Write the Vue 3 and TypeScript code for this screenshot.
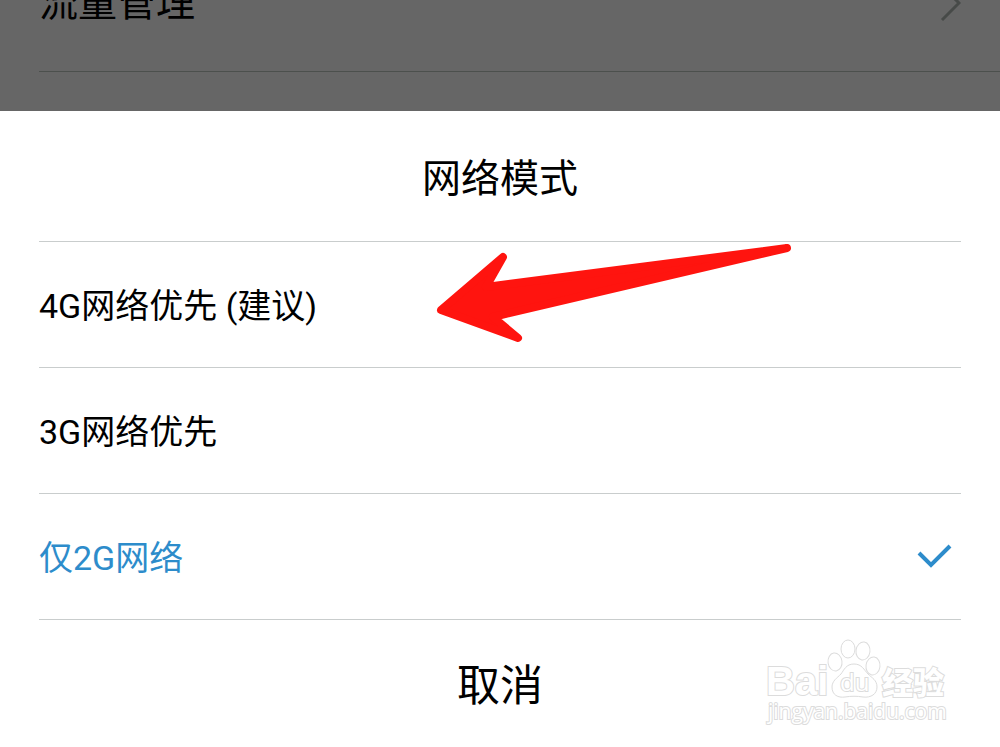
<script setup lang="ts">
import { ref } from 'vue'

interface NetworkMode {
  id: string
  label: string
}

const modes: NetworkMode[] = [
  { id: '4g', label: '4G网络优先 (建议)' },
  { id: '3g', label: '3G网络优先' },
  { id: '2g', label: '仅2G网络' },
]
const selected = ref('2g')
</script>

<template>
  <div class="screen">
    <div class="backdrop">
      <a class="setting" href="#">
        <span>流量管理</span>
        <svg class="chevron" width="24" height="40" viewBox="0 0 24 40" aria-hidden="true">
          <path d="M5 3 22 20 5 37" fill="none" stroke="#474a48" stroke-width="3" />
        </svg>
      </a>
    </div>

    <section class="sheet" role="dialog" aria-labelledby="sheet-title">
      <h1 id="sheet-title" class="title">网络模式</h1>
      <div class="options" role="radiogroup" aria-labelledby="sheet-title">
        <label
          v-for="mode in modes"
          :key="mode.id"
          class="option"
          :class="{ active: mode.id === selected }"
          :for="'mode-' + mode.id"
        >
          <input :id="'mode-' + mode.id" v-model="selected" type="radio" name="mode" :value="mode.id" />
          <span>{{ mode.label }}</span>
          <svg v-if="mode.id === selected" class="check" width="36" height="26" viewBox="0 0 36 26" aria-hidden="true">
            <path d="M3 10 15 22 34 3" fill="none" stroke="#2d8ccb" stroke-width="4" />
          </svg>
        </label>
        <svg class="arrow" width="360" height="102" viewBox="0 0 360 102" aria-hidden="true">
          <path
            d="M6 68 68 15 51 45 352 6 58 75 83 96Z"
            fill="#ff140f"
            stroke="#ff140f"
            stroke-width="8"
            stroke-linejoin="round"
          />
        </svg>
      </div>
      <button class="cancel" type="button">取消</button>

      <svg class="watermark" width="190" height="96" viewBox="0 0 190 96" role="img" aria-label="Baidu经验">
        <g fill="#fff" stroke="#dcdcdc" stroke-width="1">
          <text class="brand" x="3" y="60">Bai</text>
          <ellipse cx="72" cy="27" rx="7" ry="9" transform="rotate(-8 72 27)" />
          <ellipse cx="85" cy="14" rx="7" ry="9" />
          <ellipse cx="100" cy="16" rx="7" ry="9" transform="rotate(8 100 16)" />
          <ellipse cx="110" cy="31" rx="7" ry="9" transform="rotate(8 110 31)" />
          <path d="M91 29c-8 0-10 6-13 10-4 4-9 7-9 13 0 8 6 11 13 10 6-1 12-1 18 0 8 1 14-3 14-10 0-7-5-9-9-13-4-4-6-10-14-10Z" />
          <text class="du" x="77" y="56">du</text>
          <text class="cjk" x="119" y="59">经验</text>
          <text class="site" x="5" y="84">jingyan.baidu.com</text>
        </g>
      </svg>
    </section>
  </div>
</template>

<style>
body {
  margin: 0;
}
</style>

<style scoped>
.screen {
  display: flex;
  flex-direction: column;
  min-height: 100vh;
  background: #fff;
  color: #000;
  font-family: Roboto, "Noto Sans CJK SC", sans-serif;
}

.backdrop {
  display: flex;
  flex-direction: column;
  justify-content: flex-end;
  box-sizing: border-box;
  height: 111px;
  padding: 0 0 39px 39px;
  overflow: hidden;
  background: #666;
}

.setting {
  display: flex;
  flex: none;
  align-items: center;
  justify-content: space-between;
  box-sizing: border-box;
  height: 138px;
  padding-right: 39px;
  border-bottom: 1px solid #4c504d;
  color: #000;
  font-size: 39px;
  line-height: 46px;
  text-decoration: none;
}

.sheet {
  position: relative;
  display: flex;
  flex: 1;
  flex-direction: column;
  padding: 0 39px;
  background: #fff;
}

.title {
  box-sizing: border-box;
  margin: 0;
  padding-top: 6px;
  border-bottom: 1px solid #c9cdcd;
  font-size: 39px;
  font-weight: 400;
  line-height: 124px;
  text-align: center;
}

.options {
  position: relative;
}

.option {
  display: flex;
  align-items: center;
  justify-content: space-between;
  box-sizing: border-box;
  height: 126px;
  padding: 0 9px 2px 0;
  border-bottom: 1px solid #c9cdcd;
  font-size: 34px;
  cursor: pointer;
}

.option input {
  position: absolute;
  opacity: 0;
  margin: 0;
}

.active {
  color: #2d8ccb;
}

.arrow {
  position: absolute;
  top: 0;
  left: 43%;
}

.cancel {
  flex: 1;
  min-height: 120px;
  padding: 0 0 4px;
  border: 0;
  background: none;
  color: inherit;
  font-family: inherit;
  font-size: 43px;
  cursor: pointer;
}

.watermark {
  position: absolute;
  right: 47px;
  bottom: 16px;
  pointer-events: none;
}

.watermark text {
  paint-order: stroke;
  stroke-width: 2px;
}

.brand {
  font: 700 40px "Liberation Sans", sans-serif;
}

.du {
  font: 400 24px "Open Sans", sans-serif;
}

.cjk {
  font: 900 31px "Noto Sans CJK SC", sans-serif;
}

.site {
  font: 400 21px "Open Sans", sans-serif;
}
</style>
